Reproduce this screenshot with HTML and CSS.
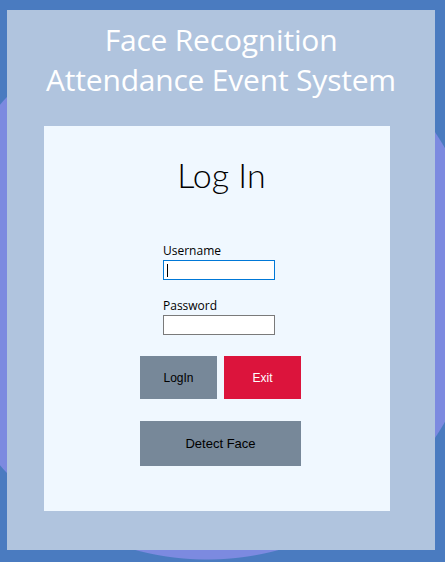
FILE: index.html
```html
<!DOCTYPE html>
<html>
<head>
<meta charset="utf-8">
<link rel="stylesheet" href="styles.css">
</head>
<body>
<div class="backdrop">
  <div class="panel">
    <h1 class="title">Face Recognition<br>Attendance Event System</h1>
    <div class="card">
      <h2 class="login-title">Log In</h2>
      <div class="form">
        <label class="label">Username</label>
        <input class="field focused" type="text" value="">
        <label class="label pw">Password</label>
        <input class="field" type="password" value="">
      </div>
      <div class="buttons">
        <div class="row">
          <button class="btn gray">LogIn</button>
          <button class="btn red">Exit</button>
        </div>
        <button class="btn gray wide">Detect Face</button>
      </div>
    </div>
  </div>
</div>
</body>
</html>
```

FILE: styles.css
```css
html, body {
  margin: 0;
  padding: 0;
}
body {
  width: 445px;
  height: 562px;
  overflow: hidden;
  background-color: #4a7bc0;
  background-image: radial-gradient(circle at 207px 285px, #7c8ae0 0, #7c8ae0 274px, rgba(124,138,224,0) 275px);
}
.backdrop {
  padding: 10px 10px 12px 7px;
}
.panel {
  width: 428px;
  height: 540px;
  background: #b0c4de;
  display: flex;
  flex-direction: column;
  align-items: flex-start;
}
.title {
  margin: 0;
  width: 428px;
  padding-top: 10px;
  height: 116px;
  flex-shrink: 0;
  box-sizing: border-box;
  text-align: center;
  color: #ffffff;
  font-family: "Open Sans", sans-serif;
  font-weight: 400;
  font-size: 30px;
  line-height: 40px;
  letter-spacing: -0.2px;
}
.card {
  margin-left: 37px;
  width: 346px;
  height: 385px;
  flex-shrink: 0;
  background: #f0f8ff;
  display: flex;
  flex-direction: column;
  align-items: flex-start;
}
.login-title {
  margin: 0;
  width: 346px;
  box-sizing: border-box;
  padding-top: 29px;
  padding-left: 9px;
  text-align: center;
  font-family: "Lato", sans-serif;
  font-weight: 300;
  font-size: 34px;
  line-height: 40px;
  color: #000;
}
.form {
  margin-left: 119px;
  margin-top: 49px;
  display: flex;
  flex-direction: column;
}
.label {
  font-family: "Open Sans", sans-serif;
  font-size: 12px;
  line-height: 14px;
  color: #000;
  margin-bottom: 2px;
}
.label.pw {
  margin-top: 19px;
}
.field {
  width: 112px;
  height: 20px;
  box-sizing: border-box;
  margin: 0;
  border: 1px solid #7a7a7a;
  background: #fff;
  padding: 0 2px;
  font-size: 12px;
  outline: none;
}
.field.focused {
  border-color: #0078d7;
  background: linear-gradient(#000, #000) no-repeat 3px 3px / 1px 13px, #fff;
}
.buttons {
  margin-left: 96px;
  margin-top: 21px;
  display: flex;
  flex-direction: column;
  gap: 22px;
}
.row {
  display: flex;
  gap: 7px;
}
.btn {
  border: none;
  margin: 0;
  padding: 0;
  width: 77px;
  height: 43px;
  font-family: "Liberation Sans", Arial, sans-serif;
  font-size: 12px;
  color: #000;
  cursor: default;
}
.btn.gray {
  background: #778899;
}
.btn.red {
  background: #dc143c;
  color: #fff;
}
.btn.wide {
  width: 161px;
  height: 45px;
  font-size: 13px;
}
```
